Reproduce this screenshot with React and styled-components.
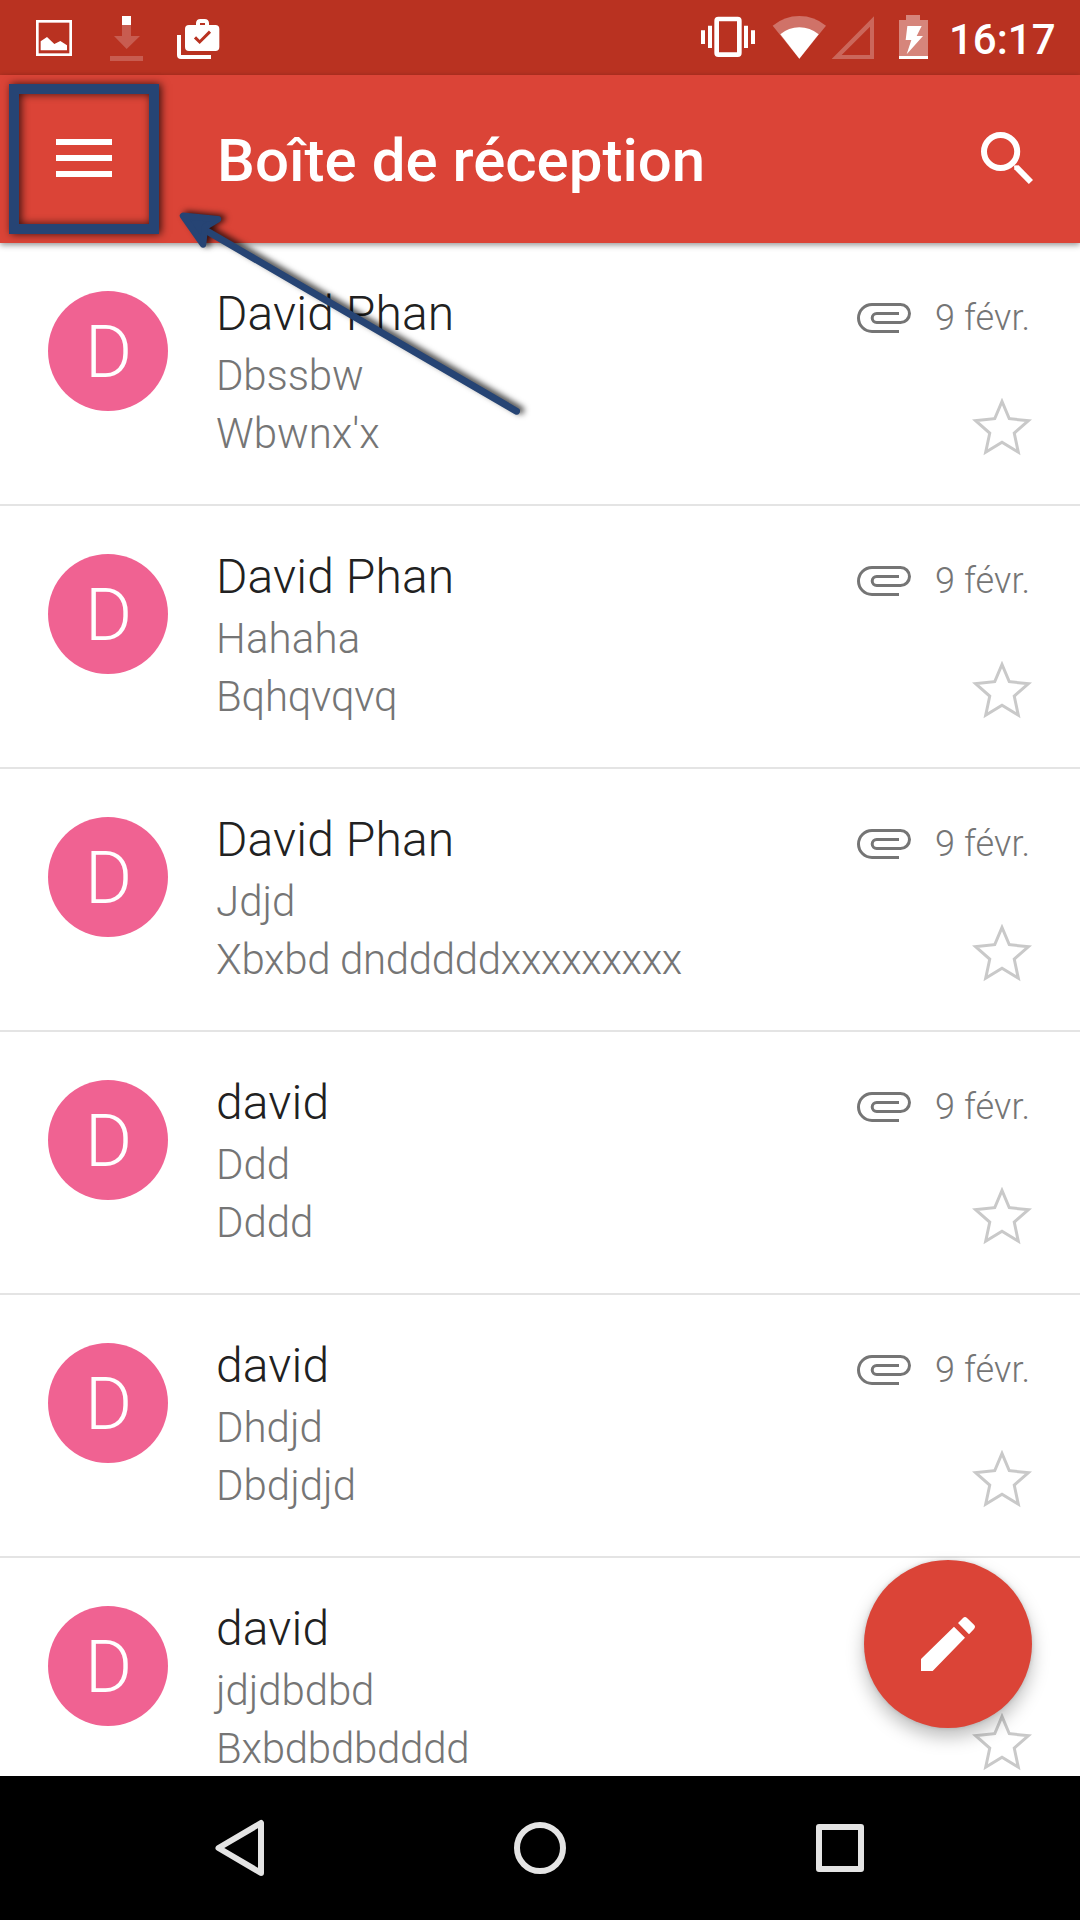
import React from "react";
import styled, { createGlobalStyle } from "styled-components";

const GlobalStyle = createGlobalStyle`
  * { box-sizing: border-box; }
  body { margin: 0; background: #fff; }
  svg { display: block; flex: none; }
`;

const Screen = styled.div`
  position: relative;
  display: flex;
  flex-direction: column;
  width: 1080px;
  height: 1920px;
  overflow: hidden;
  background: #fff;
  font-family: Roboto, "Liberation Sans", sans-serif;
`;

const StatusBar = styled.header`
  display: flex;
  justify-content: space-between;
  flex: none;
  height: 75px;
  padding: 0 24px 0 36px;
  background: #b93221;
`;

const StatusGroup = styled.div`
  display: flex;
  align-items: flex-start;
`;

const StatusGlyph = styled.svg`
  height: 75px;
  width: ${(p) => p.$width}px;
  margin-left: ${(p) => p.$gap || 0}px;
`;

const Clock = styled.span`
  width: 107px;
  margin-left: 21px;
  padding-top: 15px;
  font-size: 42px;
  line-height: 49px;
  font-weight: 500;
  white-space: nowrap;
  color: #fff;
`;

const AppBar = styled.div`
  position: relative;
  z-index: 1;
  display: flex;
  align-items: center;
  flex: none;
  height: 168px;
  padding: 0 45px 0 9px;
  background: #db4437;
  box-shadow: 0 2px 6px rgba(0, 0, 0, 0.42);
`;

const MenuButton = styled.button`
  display: flex;
  flex-direction: column;
  align-items: center;
  justify-content: center;
  gap: 10px;
  width: 150px;
  height: 150px;
  margin-right: 58px;
  padding: 0 0 2px;
  border: 10px solid #264474;
  background: none;
  box-shadow:
    2px 0 8px rgba(0, 0, 0, 0.75),
    inset 2px 0 8px rgba(0, 0, 0, 0.75);
`;

const MenuLine = styled.span`
  width: 56px;
  height: 6px;
  background: #fff;
`;

const Title = styled.h1`
  flex: 1;
  margin: 0;
  padding-top: 3px;
  font-size: 60px;
  line-height: 70px;
  font-weight: 500;
  color: #fff;
`;

const MailList = styled.main`
  flex: 1;
  min-height: 0;
  overflow: hidden;
`;

const MailRow = styled.article`
  display: flex;
  height: 263px;
  padding: 0 48px;
  border-bottom: 2px solid #e4e4e4;
`;

const Avatar = styled.div`
  display: flex;
  align-items: center;
  justify-content: center;
  flex: none;
  width: 120px;
  height: 120px;
  margin: 48px 48px 0 0;
  padding: 3px 0 0 1px;
  border-radius: 50%;
  background: #f06292;
  font-size: 72px;
  line-height: 84px;
  font-weight: 300;
  color: #fff;
`;

const Message = styled.div`
  display: flex;
  flex-direction: column;
  gap: 9px;
  flex: 1;
  padding-top: 43px;
  white-space: nowrap;
`;

const Sender = styled.div`
  font-size: 48px;
  line-height: 56px;
  font-weight: 300;
  letter-spacing: 0.12px;
  color: #212121;
`;

const Line = styled.div`
  font-size: 42px;
  line-height: 49px;
  font-weight: 300;
  letter-spacing: ${(p) => p.$tracking || 0}px;
  color: #757575;
`;

const Meta = styled.div`
  display: flex;
  flex-direction: column;
  align-items: flex-end;
  width: 176px;
  padding-top: 54px;
`;

const MetaTop = styled.div`
  display: flex;
  align-items: flex-start;
  height: 101px;
  gap: 24px;
`;

const ClipIcon = styled.svg`
  width: 54px;
  height: 30px;
  margin-top: 6px;
`;

const DateText = styled.time`
  width: 97px;
  font-size: 36px;
  line-height: 42px;
  font-weight: 300;
  letter-spacing: 0.1px;
  white-space: nowrap;
  color: #757575;
`;

const StarIcon = styled.svg`
  width: 60px;
  height: 58px;
`;

const Compose = styled.button`
  position: absolute;
  left: 864px;
  top: 1560px;
  display: flex;
  align-items: center;
  justify-content: center;
  width: 168px;
  height: 168px;
  padding: 0;
  border: 0;
  border-radius: 50%;
  background: #db4437;
  box-shadow: 0 9px 18px rgba(0, 0, 0, 0.26), 0 0 4px rgba(0, 0, 0, 0.14);
`;

const NavBar = styled.nav`
  display: flex;
  justify-content: space-between;
  align-items: center;
  flex: none;
  height: 144px;
  padding: 0 210px;
  background: #000;
`;

const Arrow = styled.svg`
  position: absolute;
  left: 170px;
  top: 200px;
  z-index: 2;
  filter: drop-shadow(4px -1px 3px rgba(0, 0, 0, 0.8));
  pointer-events: none;
`;

const STAR = "M30 -.4 38.3 19.3 60 21.5 43.9 35.7 48.5 57.3 30 46 11.5 57.3 16.1 35.7 0 21.5 21.7 19.3Z";

const mails = [
  { sender: "David Phan", subject: "Dbssbw", body: "Wbwnx'x", date: "9 févr.", tracking: [-0.15, 0] },
  { sender: "David Phan", subject: "Hahaha", body: "Bqhqvqvq", date: "9 févr.", tracking: [0.15, -0.15] },
  { sender: "David Phan", subject: "Jdjd", body: "Xbxbd dndddddxxxxxxxxx", date: "9 févr.", tracking: [0, -0.33] },
  { sender: "david", subject: "Ddd", body: "Dddd", date: "9 févr.", tracking: [0, -0.1] },
  { sender: "david", subject: "Dhdjd", body: "Dbdjdjd", date: "9 févr.", tracking: [0, 0] },
  { sender: "david", subject: "jdjdbdbd", body: "Bxbdbdbdddd", tracking: [-0.1, -0.25] },
];

function Status() {
  return (
    <StatusBar>
      <StatusGroup>
        <StatusGlyph $width={36} viewBox="108 0 108 225" fill="#fff">
          <rect x="112" y="64" width="100" height="100" fill="none" stroke="#fff" strokeWidth="8" />
          <path d="M122 124 141 111 163 132 181 123 201 136V151H122Z" />
        </StatusGlyph>
        <StatusGlyph $width={33} $gap={38} viewBox="330 0 99 225" fill="#c85c50">
          <path d="M366 75H393V108H420L380 147 342 108H366ZM330 168H429V183H330Z" />
          <path fill="#fff" d="M366 48H393V75H366Z" />
        </StatusGlyph>
        <StatusGlyph $width={43} $gap={34} viewBox="531 0 129 225" fill="#fff">
          <path fillRule="evenodd" d="M588 75V69Q589 57 601 57H614Q626 57 627 69V75H646Q658 75 658 87V141Q658 153 646 153H567Q555 153 555 141V87Q555 75 567 75ZM600 75H615V69H600Z" />
          <path d="M531 105H543V165H633V177H543Q531 177 531 165Z" />
          <path d="M585 112 599 126 630 95" fill="none" stroke="#b93221" strokeWidth="9" />
        </StatusGlyph>
      </StatusGroup>
      <StatusGroup>
        <StatusGlyph $width={54} viewBox="63 0 162 225" fill="#fff">
          <path d="M63 91H75V132H63ZM84 77H96V144H84ZM192 77H204V144H192ZM213 91H225V132H213Z" />
          <rect x="110" y="57" width="68" height="107" rx="5" fill="none" stroke="#fff" strokeWidth="14" />
        </StatusGlyph>
        <StatusGlyph $width={55} $gap={17} viewBox="276 0 165 225">
          <path fill="#d07268" d="M358 176 278 77Q313 48 358 48T438 77Z" />
          <path fill="#fff" d="M358 176 301 103Q326 82 358 82T416 103Z" />
        </StatusGlyph>
        <StatusGlyph $width={44} $gap={4} viewBox="453 0 132 225">
          <path fill="#cb675b" fillRule="evenodd" d="M455 177H582V49ZM485 165H570V80Z" />
        </StatusGlyph>
        <StatusGlyph $width={29} $gap={24} viewBox="657 0 87 225" fill="#fff">
          <path fill="#d6857b" d="M678 45H720V60H744V177H657V60H678Z" />
          <path d="M657 168H744V177H657ZM682 78H725L710 108H729L680 163 694 120H677Z" />
        </StatusGlyph>
        <Clock>16:17</Clock>
      </StatusGroup>
    </StatusBar>
  );
}

function Mail({ mail }) {
  return (
    <MailRow>
      <Avatar>D</Avatar>
      <Message>
        <Sender>{mail.sender}</Sender>
        <Line $tracking={mail.tracking[0]}>{mail.subject}</Line>
        <Line $tracking={mail.tracking[1]}>{mail.body}</Line>
      </Message>
      <Meta>
        <MetaTop>
          {mail.date && (
            <>
              <ClipIcon viewBox="0 0 54 30" fill="none" stroke="#757575" strokeWidth="3">
                <path d="M42 28.5H15A13.5 13.5 0 0 1 15 1.5H43.5A9 9 0 0 1 43.5 19.5H19.7A4.5 4.5 0 0 1 19.7 10.5H42" />
              </ClipIcon>
              <DateText>{mail.date}</DateText>
            </>
          )}
        </MetaTop>
        <StarIcon viewBox="0 0 60 58">
          <path d={STAR} clipPath="url(#star-inside)" fill="none" stroke="#c9c9c9" strokeWidth="6" />
        </StarIcon>
      </Meta>
    </MailRow>
  );
}

export default function App() {
  return (
    <Screen>
      <GlobalStyle />
      <Status />
      <AppBar>
        <MenuButton aria-label="Menu">
          <MenuLine />
          <MenuLine />
          <MenuLine />
        </MenuButton>
        <Title>Boîte de réception</Title>
        <svg width="57" height="60" viewBox="978 129 57 60" fill="#fff">
          <circle cx="1000.6" cy="151.5" r="16.6" fill="none" stroke="#fff" strokeWidth="6" />
          <path d="M1014 165.5 1014.3 169.3 1028.8 184 1033 180 1018.6 165.3Z" />
        </svg>
      </AppBar>
      <MailList>
        {mails.map((mail, i) => (
          <Mail key={i} mail={mail} />
        ))}
      </MailList>
      <NavBar>
        <svg width="60" height="60" viewBox="210 1818 60 60" fill="none" stroke="#e4e4e4" strokeWidth="6" strokeLinejoin="round">
          <path d="M218.5 1848 261 1823V1873Z" />
        </svg>
        <svg width="60" height="60" viewBox="510 1818 60 60" fill="none" stroke="#e4e4e4" strokeWidth="6">
          <circle cx="540" cy="1848" r="23" />
        </svg>
        <svg width="60" height="60" viewBox="810 1818 60 60" fill="none" stroke="#e4e4e4" strokeWidth="6" strokeLinejoin="round">
          <path d="M819 1827H861V1869H819Z" />
        </svg>
      </NavBar>
      <Compose aria-label="Compose">
        <svg width="54" height="54" viewBox="243 231 162 162" fill="#fff">
          <path d="M243 357 342 260 375 293 278 393H243ZM354 249 369 234Q375 228 381 234L402 254Q408 260 402 267L387 283Z" />
        </svg>
      </Compose>
      <Arrow width="370" height="230" viewBox="170 200 370 230" stroke="#264474" strokeLinecap="round" strokeLinejoin="round">
        <defs>
          <clipPath id="star-inside">
            <path d={STAR} />
          </clipPath>
        </defs>
        <path d="M200 227 516.5 411.2" strokeWidth="7" fill="none" />
        <path d="M183 215.8 218 219.2 205 227 203 244.5Z" strokeWidth="6.5" fill="#264474" />
      </Arrow>
    </Screen>
  );
}
